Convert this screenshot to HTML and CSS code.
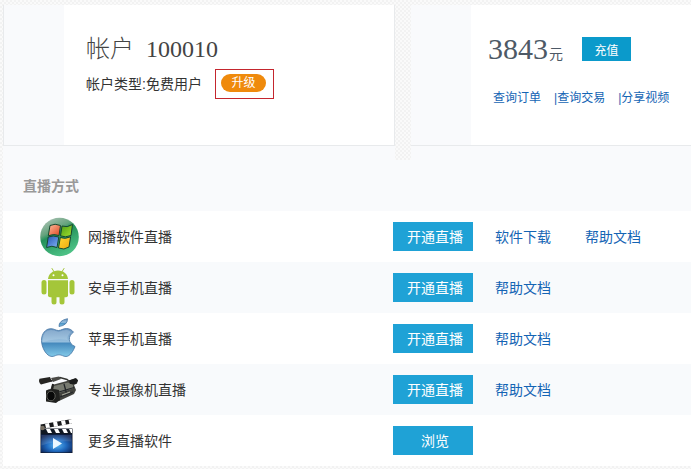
FILE: index.html
```html
<!DOCTYPE html>
<html lang="zh-CN">
<head>
<meta charset="utf-8">
<title>直播方式</title>
<link rel="stylesheet" href="styles.css">
</head>
<body>
<main class="page">
  <div class="summary">
    <section class="panel">
      <div class="card card-framed">
        <div class="card-body account">
          <h1 class="account-title"><span>帐户</span><span>100010</span></h1>
          <div class="account-type">
            <span>帐户类型:免费用户</span>
            <div class="upgrade-frame"><button type="button" class="upgrade">升级</button></div>
          </div>
        </div>
      </div>
    </section>
    <section class="panel">
      <div class="card">
        <div class="card-body balance">
          <div class="balance-row">
            <div><span class="amount">3843</span><span class="unit">元</span></div>
            <button type="button" class="recharge">充值</button>
          </div>
          <nav class="queries">
            <a href="#">查询订单</a>
            <a href="#">|查询交易</a>
            <a href="#">|分享视频</a>
          </nav>
        </div>
      </div>
    </section>
  </div>
  <section class="methods">
    <h2 class="methods-title">直播方式</h2>
    <table class="methods-table">
      <colgroup><col class="col-icon"><col><col class="col-action"><col class="col-link"><col class="col-last"></colgroup>
      <tbody>
        <tr>
          <td class="icon-cell">
            <svg class="icon" viewBox="0 0 40 40" aria-hidden="true">
              <defs>
                <linearGradient id="orb" x1="0" y1="0" x2=".5" y2="1"><stop offset="0" stop-color="#bcc9c0"/><stop offset=".4" stop-color="#64a37d"/><stop offset=".5" stop-color="#23905a"/><stop offset="1" stop-color="#4cc084"/></linearGradient>
                <linearGradient id="red" x1="0" y1="0" x2="1" y2="1"><stop offset="0" stop-color="#ffc0a0"/><stop offset="1" stop-color="#df421e"/></linearGradient>
                <linearGradient id="green" x1="0" y1="0" x2="1" y2="1"><stop offset="0" stop-color="#4a9b17"/><stop offset="1" stop-color="#a5e32e"/></linearGradient>
                <linearGradient id="blue" x1="0" y1="0" x2="1" y2="1"><stop offset="0" stop-color="#2453b5"/><stop offset="1" stop-color="#81b4f5"/></linearGradient>
                <linearGradient id="gold" x1="0" y1="0" x2="1" y2="1"><stop offset="0" stop-color="#ffda38"/><stop offset="1" stop-color="#efa80d"/></linearGradient>
              </defs>
              <circle cx="20.500" cy="20" r="19.300" fill="url(#orb)"/>
              <g stroke="#164730" stroke-width="1" stroke-linejoin="round">
                <path d="M11 8.500Q16 6 21.500 8.500L20 18.500Q15 16.500 9.300 18.700Z" fill="url(#red)"/>
                <path d="M23 9Q28 11 33.500 7.500L32 18.500Q26 21 21.500 18.800Z" fill="url(#green)"/>
                <path d="M9.200 20Q14 18 19.800 20L18 30.500Q13 28 7.600 30.500Z" fill="url(#blue)"/>
                <path d="M21.300 20.500Q26 22.500 31.600 19.800L30 30Q25 33.500 19.500 31Z" fill="url(#gold)"/>
              </g>
            </svg>
          </td>
          <td>网播软件直播</td>
          <td><button type="button" class="action">开通直播</button></td>
          <td><a href="#">软件下载</a></td>
          <td><a href="#">帮助文档</a></td>
        </tr>
        <tr>
          <td class="icon-cell">
            <svg class="icon" viewBox="0 0 40 40" aria-hidden="true">
              <g fill="#a4c639">
                <path d="M9 11C9.500 6 13.500 2.500 19 2.500s9.500 3.500 10 8.500Z"/>
                <path d="M13 .500l2.500 4M25 .500L22.500 4.500" stroke="#a4c639" stroke-width="1" stroke-linecap="round"/>
                <path d="M9 12.300h20v15q0 2-2 2H11q-2 0-2-2Z"/>
                <rect x="2.500" y="12" width="5" height="14.500" rx="2.500"/>
                <rect x="30.500" y="12" width="5" height="14.500" rx="2.500"/>
                <rect x="12.500" y="26" width="5" height="10.500" rx="2.500"/>
                <rect x="20.500" y="26" width="5" height="10.500" rx="2.500"/>
              </g>
              <g fill="#fff"><circle cx="14.500" cy="7.200" r="1"/><circle cx="23.500" cy="7.200" r="1"/></g>
            </svg>
          </td>
          <td>安卓手机直播</td>
          <td><button type="button" class="action">开通直播</button></td>
          <td><a href="#">帮助文档</a></td>
          <td></td>
        </tr>
        <tr>
          <td class="icon-cell">
            <svg class="icon" viewBox="0 0 40 40" aria-hidden="true">
              <defs>
                <linearGradient id="aqua" x1="0" y1="0" x2="0" y2="1"><stop offset="0" stop-color="#6591bd"/><stop offset=".48" stop-color="#96bfde"/><stop offset=".52" stop-color="#4589bd"/><stop offset="1" stop-color="#83cae9"/></linearGradient>
              </defs>
              <g fill="url(#aqua)" stroke="#4273a3" stroke-width=".8">
                <path d="M20 7.500Q19.700 1.500 28.500 -.3Q28.700 6.200 20 7.500Z"/>
                <path d="M19.500 11.500C22 11.500 24 9.500 27.500 9.500C30.500 9.500 33 11 34.500 13.200C28.500 17 29 24.500 36 27.500C34.500 31.500 31 37.500 27 37.500C24 37.500 23.200 35.800 20 35.800C16.700 35.800 15.800 37.500 13 37.500C7.500 37.500 2.500 28.500 2.500 21.500C2.500 14.500 6.500 9.700 12 9.700C15 9.700 17 11.500 19.500 11.500Z"/>
              </g>
              <path d="M4 21Q4 11 12 11Q15 11 19.500 13Q24 11 27.500 11Q30 11 32 13Q27.500 17 28.500 21Q16 19 4 23Z" fill="#d8e8f5" opacity=".25"/>
            </svg>
          </td>
          <td>苹果手机直播</td>
          <td><button type="button" class="action">开通直播</button></td>
          <td><a href="#">帮助文档</a></td>
          <td></td>
        </tr>
        <tr>
          <td class="icon-cell">
            <svg class="icon" viewBox="0 0 40 40" aria-hidden="true">
              <path d="M12 11L21 7.500L28 9.500L31 12" fill="none" stroke="#333431" stroke-width="1.500"/>
              <path d="M.5 8.800L11 7L13 11.500L2 14.500Q-1 12 .5 8.800Z" fill="#252422"/>
              <path d="M12 8L20 6.500L22 9L14 12Z" fill="#4a4a46"/>
              <path d="M13 15L28 11L36 8.500L39 10L38 13.500L35 15L37 20L35 24L20 31L9 26Z" fill="#42433e"/>
              <path d="M15 16L29 12.500L34 15L34 18.500L20 23L14 19Z" fill="#777a70"/>
              <path d="M30 10.500L37 8L39 10.500L37 14L31 14Z" fill="#1c1d1d"/>
              <path d="M20 22L35 17.500M21 27L34 22M25 14L28 25" stroke="#24272a" stroke-width="1.300"/>
              <path d="M23 25L31 22" stroke="#a7a89a" stroke-width="1.200"/>
              <path d="M7 20.500Q12 18 20 20L21 30L17 33L7 31.500Z" fill="#20211f"/>
              <ellipse cx="12" cy="26" rx="4.200" ry="4.800" fill="#080909" stroke="#5b5c57"/>
              <path d="M14 14l-1 6" stroke="#20211f" stroke-width="2"/>
            </svg>
          </td>
          <td>专业摄像机直播</td>
          <td><button type="button" class="action">开通直播</button></td>
          <td><a href="#">帮助文档</a></td>
          <td></td>
        </tr>
        <tr>
          <td class="icon-cell">
            <svg class="icon" viewBox="0 0 40 40" aria-hidden="true">
              <defs>
                <radialGradient id="screen" cx=".5" cy=".6" r=".65"><stop offset="0" stop-color="#59b9f5"/><stop offset=".5" stop-color="#1f68bd"/><stop offset="1" stop-color="#0b1e4e"/></radialGradient>
              </defs>
              <path d="M1.500 3.500L33 -2V2.500L2 8Z" fill="#191a1c"/>
              <path d="M6 2.700l4-.7 1 4.400-4 .7zM14 1.300l4-.7 1 4.400-4 .7zM22 0l4-.7 1 4.300-4 .7zM29.500-1.300l3.500-.7v4.500l-2.500.5z" fill="#fff"/>
              <path d="M1.500 7.500H33.500V32H1.500Z" fill="#101722"/>
              <path d="M7 8h4l2 4H9zM15 8h4l2 4h-4zM23 8h4l2 4h-4zM30 8h3v4h-1z" fill="#fff"/>
              <circle cx="3.500" cy="7" r="2.300" fill="#766e61"/>
              <path d="M2 13.500H33V31.500H2Z" fill="url(#screen)"/>
              <path d="M2.500 14H32.500V20.500Q18 19.500 2.500 24.500Z" fill="#fff" opacity=".12"/>
              <path d="M14 17L23 22.500L14 28Z" fill="#eaf7ff"/>
            </svg>
          </td>
          <td>更多直播软件</td>
          <td><button type="button" class="action">浏览</button></td>
          <td></td>
          <td></td>
        </tr>
      </tbody>
    </table>
  </section>
</main>
</body>
</html>
```

FILE: styles.css
```css
* { box-sizing: border-box; }

body {
  margin: 0;
  color: #333;
  font: 14px/20px "Liberation Sans", "Noto Sans CJK SC", sans-serif;
  background: repeating-conic-gradient(#f2f2f2 0 25%, #fafafa 0 50%) 0 0 / 4px 4px;
}

button {
  border: 0;
  color: #fff;
  font-family: inherit;
  cursor: pointer;
}

a { color: #1464b4; text-decoration: none; }

.page { padding: 5px 0 3px 3px; }

.summary {
  display: grid;
  grid-template-columns: 7fr 5fr;
  gap: 16px;
}

.panel { padding-bottom: 14px; background: #f9fafc; }

.card {
  height: 141px;
  padding-left: 60px;
  border-bottom: 1px solid #e8eaec;
}

.card-framed {
  border-right: 1px solid #e8eaec;
  border-left: 1px solid #e8eaec;
}

.card-body { height: 100%; background: #fff; }

.account { padding: 28px 0 0 22px; }

.account-title {
  display: flex;
  gap: 12px;
  margin: 0;
  color: #444;
  font: 300 24px/32px "Liberation Serif", "Noto Sans CJK SC", serif;
}

.account-type {
  display: flex;
  align-items: center;
  gap: 13px;
  margin-top: 4px;
}

.upgrade-frame {
  display: flex;
  padding: 4px 7px 6px 5px;
  border: 1px solid #c4262e;
}

.upgrade {
  width: 45px;
  height: 18px;
  padding: 0;
  border-radius: 9px;
  background: #ef8a0c;
  font-size: 12px;
  line-height: 18px;
}

.balance { padding: 28px 0 0 17px; }

.balance-row {
  display: flex;
  align-items: center;
  gap: 19px;
  height: 32px;
  color: #4d5966;
}

.amount { font: 30px/32px "Liberation Serif", serif; }

.unit { margin-left: 1px; }

.recharge {
  width: 49px;
  height: 24px;
  padding: 0;
  background: #0b9acb;
  font-size: 12px;
}

.queries {
  display: flex;
  gap: 13px;
  padding: 23px 0 0 5px;
  font-size: 12px;
}

.methods-title {
  margin: 0;
  padding: 16px 20px 15px;
  background: #f9fafc;
  color: #999;
  font-size: 14px;
  line-height: 20px;
}

.methods-table {
  width: 100%;
  table-layout: fixed;
  border-collapse: collapse;
}

.methods-table tr { height: 51px; background: #fff; }
.methods-table tr:nth-child(even) { background: #f8fafc; }
.methods-table td { padding: 0; }
.methods-table .icon-cell { padding-left: 36px; }

.col-icon { width: 85px; }
.col-action { width: 102px; }
.col-link { width: 90px; }
.col-last { width: 106px; }

.icon {
  display: block;
  width: 40px;
  height: 40px;
  overflow: visible;
}

.action {
  display: block;
  width: 80px;
  height: 29px;
  padding: 0 8px 2px 12px;
  background: #1fa2d6;
  font-size: 14px;
}
```
